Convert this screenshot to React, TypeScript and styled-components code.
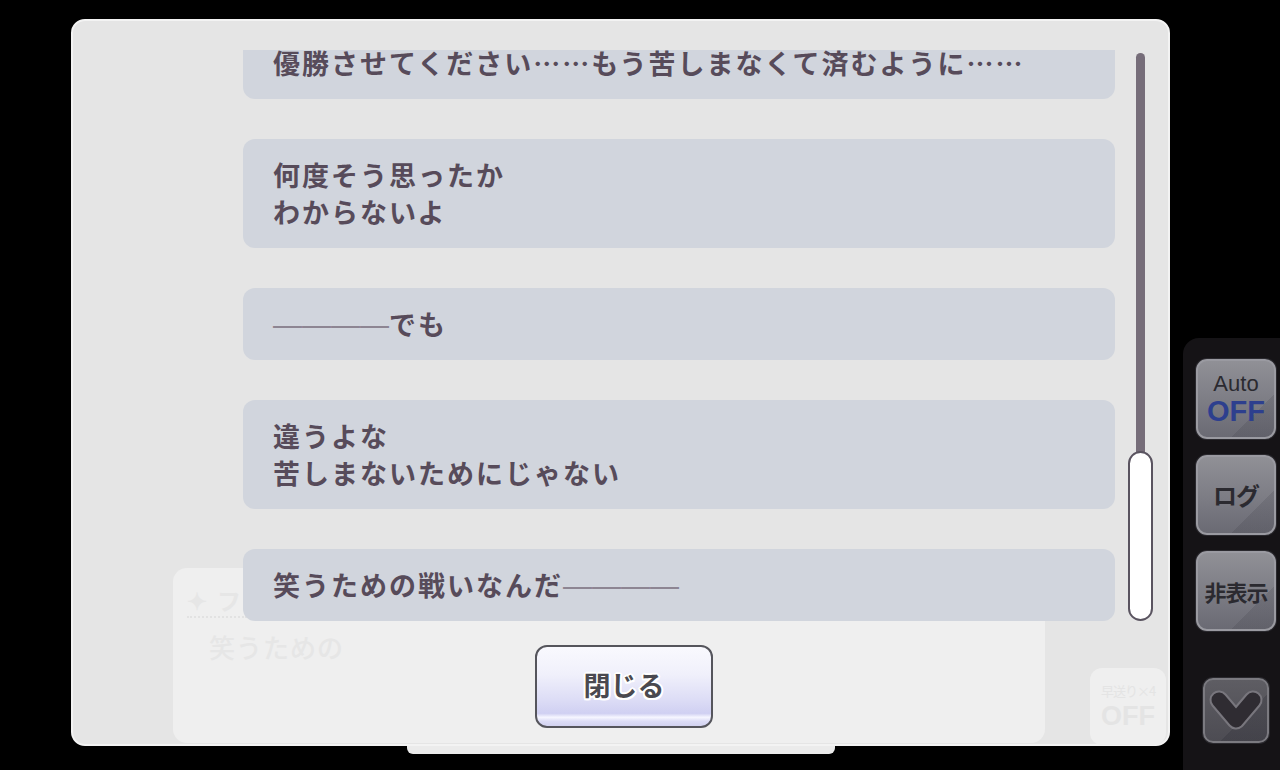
import React from "react";
import styled, { createGlobalStyle } from "styled-components";

const Global = createGlobalStyle`
  html, body { margin: 0; padding: 0; background: #000; }
  body { width: 1280px; height: 770px; overflow: hidden; }
`;

const JP = `"Noto Sans CJK JP", "Noto Sans", sans-serif`;
const LAT = `"Liberation Sans", "Noto Sans", sans-serif`;

const Stage = styled.div`
  position: relative;
  width: 1280px;
  height: 770px;
  background: #000;
  display: flex;
  align-items: flex-start;
  font-family: ${JP};
`;

const Panel = styled.div`
  position: relative;
  box-sizing: border-box;
  margin: 19px 0 0 71px;
  width: 1099px;
  height: 727px;
  background: #e5e5e5;
  border: 2px solid #f3f3f3;
  border-radius: 14px;
  display: flex;
  flex-direction: column;
  padding-top: 29px;
  z-index: 1;
`;

const UnderBox = styled.div`
  position: absolute;
  left: 100px;
  top: 547px;
  width: 872px;
  height: 175px;
  border-radius: 14px;
  background: #efefef;
  box-sizing: border-box;
  padding: 14px 0 0 14px;
  color: #e6e6e6;
`;

const UnderName = styled.div`
  display: flex;
  align-items: center;
  gap: 10px;
  width: 60px;
  height: 34px;
  border-bottom: 2px dotted #e2e2e2;
  font-size: 24px;
  font-weight: 700;
`;

const UnderText = styled.div`
  margin: 10px 0 0 22px;
  font-size: 26px;
  font-weight: 500;
  letter-spacing: 1px;
`;

const FastBox = styled.div`
  position: absolute;
  right: 2px;
  bottom: -1px;
  width: 76px;
  height: 77px;
  border-radius: 12px;
  background: #efefef;
  color: #e4e4e4;
  display: flex;
  flex-direction: column;
  align-items: center;
  justify-content: center;
  gap: 3px;
`;

const FastLabel = styled.span`
  font-family: ${JP};
  font-size: 13px;
  line-height: 16px;
  letter-spacing: -1px;
`;

const FastState = styled.span`
  font-family: ${LAT};
  font-size: 27px;
  line-height: 28px;
  font-weight: 700;
`;

const Body = styled.div`
  position: relative;
  z-index: 1;
  display: flex;
  gap: 13px;
  height: 572px;
  padding: 0 0 0 170px;
`;

const List = styled.div`
  width: 872px;
  height: 572px;
  overflow: hidden;
  display: flex;
  flex-direction: column;
  gap: 40px;
`;

const Bubble = styled.div<{ $first?: boolean }>`
  flex: none;
  box-sizing: border-box;
  margin-top: ${(p) => (p.$first ? "-23px" : "0")};
  padding: 17px 30px 18px;
  border-radius: 12px;
  background: #d1d5dd;
  color: #574b5a;
  font-size: 27px;
  font-weight: 700;
  line-height: 37px;
  letter-spacing: 2px;
  white-space: nowrap;
`;

const Dash = styled.span`
  font-family: ${LAT};
  font-weight: 400;
  font-size: 29px;
  line-height: 0;
  letter-spacing: 0;
  color: #8d8592;
`;

const ScrollCol = styled.div`
  width: 25px;
  padding: 3px 0 1px;
  display: flex;
  flex-direction: column;
  align-items: center;
`;

const Track = styled.div`
  flex: 1;
  width: 9px;
  border-radius: 5px 5px 0 0;
  background: #766d79;
`;

const Thumb = styled.div`
  box-sizing: border-box;
  width: 25px;
  height: 170px;
  margin-top: -4px;
  border: 2px solid #5a5460;
  border-radius: 13px;
  background: #fff;
`;

const Footer = styled.div`
  position: relative;
  z-index: 1;
  display: flex;
  justify-content: center;
  padding-left: 7px;
  margin-top: 23px;
`;

const CloseButton = styled.button`
  box-sizing: border-box;
  width: 178px;
  height: 83px;
  border: 2px solid #55555c;
  border-radius: 12px;
  background: linear-gradient(
    180deg,
    #f9f9fe 0%,
    #f0f0fb 35%,
    #dedef6 65%,
    #d0d0f2 84%,
    #f6f6ff 89%,
    #dcdcf6 94%,
    #d2d2f0 100%
  );
  font-family: ${JP};
  font-size: 27px;
  font-weight: 700;
  color: #4a494f;
  text-shadow: 2px 0 #fff, -2px 0 #fff, 0 2px #fff, 0 -2px #fff,
    1.5px 1.5px #fff, -1.5px 1.5px #fff, 1.5px -1.5px #fff, -1.5px -1.5px #fff;
  padding: 0 0 4px;
  cursor: pointer;
`;

const BottomTab = styled.div`
  position: absolute;
  left: 407px;
  top: 743px;
  width: 428px;
  height: 11px;
  border-radius: 0 0 6px 6px;
  background: #ebebeb;
  z-index: 0;
`;

const Rail = styled.div`
  margin: 338px 0 0 13px;
  width: 97px;
  height: 432px;
  box-sizing: border-box;
  background: #151316;
  border-radius: 16px 0 0 0;
  display: flex;
  flex-direction: column;
  align-items: center;
  padding: 21px 4px 0 13px;
`;

const RailButton = styled.div`
  box-sizing: border-box;
  width: 80px;
  height: 80px;
  margin-bottom: 16px;
  border: 2px solid #9a9aa1;
  border-radius: 11px;
  box-shadow: 0 0 0 1px #2a292e;
  background: linear-gradient(135deg, transparent 72%, rgba(35, 35, 45, 0.13) 72%),
    linear-gradient(180deg, #909096 0%, #7c7c84 55%, #6a6a73 100%);
  display: flex;
  flex-direction: column;
  align-items: center;
  justify-content: center;
  color: #2b2a30;
  font-family: ${JP};
  font-weight: 700;
`;

const AutoLabel = styled.span`
  font-family: ${LAT};
  font-weight: 400;
  font-size: 22px;
  line-height: 24px;
`;

const AutoState = styled.span`
  font-family: ${LAT};
  font-weight: 700;
  font-size: 29px;
  line-height: 30px;
  color: #2d3f8e;
`;

const RailText = styled.span<{ $size: number }>`
  font-size: ${(p) => p.$size}px;
  line-height: 1.2;
  letter-spacing: -1px;
`;

const DownButton = styled.div`
  box-sizing: border-box;
  width: 66px;
  height: 65px;
  margin-top: 31px;
  border: 2px solid #7b7a80;
  border-radius: 10px;
  box-shadow: 0 0 0 1px #2a292e;
  background: linear-gradient(135deg, transparent 62%, rgba(30, 30, 40, 0.2) 62%),
    linear-gradient(180deg, #5e5d63 0%, #4d4c53 100%);
  display: flex;
  align-items: center;
  justify-content: center;
`;

const messages: React.ReactNode[] = [
  <>優勝させてください……もう苦しまなくて済むように……</>,
  <>
    何度そう思ったか
    <br />
    わからないよ
  </>,
  <>
    <Dash>————</Dash>でも
  </>,
  <>
    違うよな
    <br />
    苦しまないためにじゃない
  </>,
  <>
    笑うための戦いなんだ<Dash>————</Dash>
  </>,
];

export default function App() {
  return (
    <>
      <Global />
      <Stage>
        <Panel>
          <UnderBox>
            <UnderName>
              <span>✦</span>
              <span>フ</span>
            </UnderName>
            <UnderText>笑うための</UnderText>
          </UnderBox>
          <FastBox>
            <FastLabel>早送り×4</FastLabel>
            <FastState>OFF</FastState>
          </FastBox>
          <Body>
            <List>
              {messages.map((m, i) => (
                <Bubble key={i} $first={i === 0}>
                  {m}
                </Bubble>
              ))}
            </List>
            <ScrollCol>
              <Track />
              <Thumb />
            </ScrollCol>
          </Body>
          <Footer>
            <CloseButton>閉じる</CloseButton>
          </Footer>
        </Panel>
        <BottomTab />
        <Rail>
          <RailButton>
            <AutoLabel>Auto</AutoLabel>
            <AutoState>OFF</AutoState>
          </RailButton>
          <RailButton>
            <RailText $size={24}>ログ</RailText>
          </RailButton>
          <RailButton>
            <RailText $size={22}>非表示</RailText>
          </RailButton>
          <DownButton>
            <svg width="62" height="61" viewBox="0 0 62 61">
              <polyline
                points="14,20 31,40 48,20"
                fill="none"
                stroke="#78767d"
                strokeWidth="19"
                strokeLinecap="round"
                strokeLinejoin="round"
              />
              <polyline
                points="14,20 31,40 48,20"
                fill="none"
                stroke="#2f2c32"
                strokeWidth="15"
                strokeLinecap="round"
                strokeLinejoin="round"
              />
            </svg>
          </DownButton>
        </Rail>
      </Stage>
    </>
  );
}
